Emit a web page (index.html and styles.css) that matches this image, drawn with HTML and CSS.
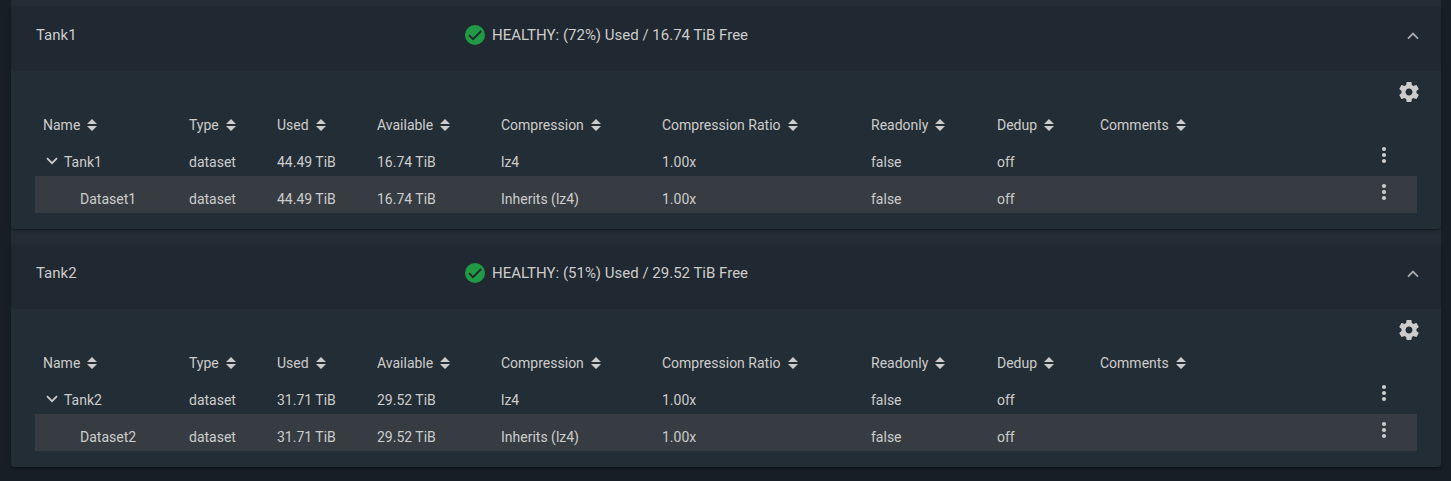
FILE: index.html
```html
<!DOCTYPE html>
<html lang="en">
<head>
<meta charset="utf-8">
<title>Storage Pools</title>
<link rel="stylesheet" href="styles.css">
</head>
<body>
<svg class="defs" aria-hidden="true">
  <symbol id="sort" viewBox="0 0 10 12"><path d="M5 0L10 5H0zM0 7H10L5 12z"/></symbol>
  <symbol id="down" viewBox="0 0 12 8"><path d="M1 1.2L6 6.2L11 1.2" fill="none" stroke="currentColor" stroke-width="1.8"/></symbol>
  <symbol id="up" viewBox="0 0 12 8"><path d="M1 6.6L6 1.6L11 6.6" fill="none" stroke="currentColor" stroke-width="1.8"/></symbol>
  <symbol id="dots" viewBox="0 0 6 18"><circle cx="3" cy="3" r="2.1"/><circle cx="3" cy="9" r="2.1"/><circle cx="3" cy="15" r="2.1"/></symbol>
  <symbol id="gear" viewBox="0 0 24 24"><path d="M19.43 12.98c.04-.32.07-.64.07-.98s-.03-.66-.07-.98l2.11-1.65c.19-.15.24-.42.12-.64l-2-3.46c-.12-.22-.39-.3-.61-.22l-2.49 1c-.52-.4-1.08-.73-1.69-.98l-.38-2.65C14.46 2.18 14.25 2 14 2h-4c-.25 0-.46.18-.49.42l-.38 2.65c-.61.25-1.17.59-1.69.98l-2.49-1c-.23-.09-.49 0-.61.22l-2 3.46c-.13.22-.07.49.12.64l2.11 1.65c-.04.32-.07.65-.07.98s.03.66.07.98l-2.11 1.65c-.19.15-.24.42-.12.64l2 3.46c.12.22.39.3.61.22l2.49-1c.52.4 1.08.73 1.69.98l.38 2.65c.03.24.24.42.49.42h4c.25 0 .46-.18.49-.42l.38-2.65c.61-.25 1.17-.59 1.69-.98l2.49 1c.23.09.49 0 .61-.22l2-3.46c.12-.22.07-.49-.12-.64l-2.11-1.65zM12 15.5c-1.93 0-3.5-1.57-3.5-3.5s1.57-3.5 3.5-3.5 3.5 1.57 3.5 3.5-1.57 3.5-3.5 3.5z"/></symbol>
  <symbol id="check" viewBox="0 0 20 20"><circle cx="10" cy="10" r="10" fill="#209a44"/><path d="M4 10.2L8 14.2L16.2 6" fill="none" stroke="#202830" stroke-width="1.9"/></symbol>
</svg>
<main class="pools">
  <section class="pool">
    <header class="pool-header">
      <span>Tank1</span>
      <span class="status"><svg class="check"><use href="#check"/></svg>HEALTHY: (72%) Used / 16.74 TiB Free</span>
      <button class="toggle" aria-label="Collapse Tank1"><svg class="chevron"><use href="#up"/></svg></button>
    </header>
    <div class="pool-body">
      <div class="toolbar"><button aria-label="Tank1 settings"><svg class="gear"><use href="#gear"/></svg></button></div>
      <table class="datasets">
        <colgroup><col class="c-name"><col class="c-type"><col class="c-used"><col class="c-available"><col class="c-compression"><col class="c-ratio"><col class="c-readonly"><col class="c-dedup"><col><col class="c-actions"></colgroup>
        <thead><tr>
          <th><button class="sort">Name<svg><use href="#sort"/></svg></button></th>
          <th><button class="sort">Type<svg><use href="#sort"/></svg></button></th>
          <th><button class="sort">Used<svg><use href="#sort"/></svg></button></th>
          <th><button class="sort">Available<svg><use href="#sort"/></svg></button></th>
          <th><button class="sort">Compression<svg><use href="#sort"/></svg></button></th>
          <th><button class="sort">Compression Ratio<svg><use href="#sort"/></svg></button></th>
          <th><button class="sort">Readonly<svg><use href="#sort"/></svg></button></th>
          <th><button class="sort">Dedup<svg><use href="#sort"/></svg></button></th>
          <th><button class="sort">Comments<svg><use href="#sort"/></svg></button></th>
          <td></td>
        </tr></thead>
        <tbody>
          <tr><td class="parent"><button class="expander" aria-label="Collapse row"><svg class="chevron"><use href="#down"/></svg></button>Tank1</td><td>dataset</td><td>44.49 TiB</td><td>16.74 TiB</td><td>lz4</td><td>1.00x</td><td>false</td><td>off</td><td></td><td class="actions"><button aria-label="Tank1 actions"><svg class="dots"><use href="#dots"/></svg></button></td></tr>
          <tr class="shaded"><td class="child">Dataset1</td><td>dataset</td><td>44.49 TiB</td><td>16.74 TiB</td><td>Inherits (lz4)</td><td>1.00x</td><td>false</td><td>off</td><td></td><td class="actions"><button aria-label="Dataset1 actions"><svg class="dots"><use href="#dots"/></svg></button></td></tr>
        </tbody>
      </table>
    </div>
  </section>
  <section class="pool">
    <header class="pool-header">
      <span>Tank2</span>
      <span class="status"><svg class="check"><use href="#check"/></svg>HEALTHY: (51%) Used / 29.52 TiB Free</span>
      <button class="toggle" aria-label="Collapse Tank2"><svg class="chevron"><use href="#up"/></svg></button>
    </header>
    <div class="pool-body">
      <div class="toolbar"><button aria-label="Tank2 settings"><svg class="gear"><use href="#gear"/></svg></button></div>
      <table class="datasets">
        <colgroup><col class="c-name"><col class="c-type"><col class="c-used"><col class="c-available"><col class="c-compression"><col class="c-ratio"><col class="c-readonly"><col class="c-dedup"><col><col class="c-actions"></colgroup>
        <thead><tr>
          <th><button class="sort">Name<svg><use href="#sort"/></svg></button></th>
          <th><button class="sort">Type<svg><use href="#sort"/></svg></button></th>
          <th><button class="sort">Used<svg><use href="#sort"/></svg></button></th>
          <th><button class="sort">Available<svg><use href="#sort"/></svg></button></th>
          <th><button class="sort">Compression<svg><use href="#sort"/></svg></button></th>
          <th><button class="sort">Compression Ratio<svg><use href="#sort"/></svg></button></th>
          <th><button class="sort">Readonly<svg><use href="#sort"/></svg></button></th>
          <th><button class="sort">Dedup<svg><use href="#sort"/></svg></button></th>
          <th><button class="sort">Comments<svg><use href="#sort"/></svg></button></th>
          <td></td>
        </tr></thead>
        <tbody>
          <tr><td class="parent"><button class="expander" aria-label="Collapse row"><svg class="chevron"><use href="#down"/></svg></button>Tank2</td><td>dataset</td><td>31.71 TiB</td><td>29.52 TiB</td><td>lz4</td><td>1.00x</td><td>false</td><td>off</td><td></td><td class="actions"><button aria-label="Tank2 actions"><svg class="dots"><use href="#dots"/></svg></button></td></tr>
          <tr class="shaded"><td class="child">Dataset2</td><td>dataset</td><td>31.71 TiB</td><td>29.52 TiB</td><td>Inherits (lz4)</td><td>1.00x</td><td>false</td><td>off</td><td></td><td class="actions"><button aria-label="Dataset2 actions"><svg class="dots"><use href="#dots"/></svg></button></td></tr>
        </tbody>
      </table>
    </div>
  </section>
</main>
</body>
</html>
```
FILE: styles.css
```css
* { box-sizing: border-box; }

body {
  margin: 0;
  padding: 0 10px 14px 11px;
  background: #171e26;
  color: #cccccc;
  font: 14px/20px Roboto, sans-serif;
}

.defs { position: absolute; width: 0; height: 0; }

svg { display: block; fill: currentColor; }

button {
  display: block;
  margin: 0;
  padding: 0;
  border: 0;
  background: none;
  color: inherit;
  font: inherit;
  cursor: pointer;
}

.pools {
  display: flex;
  flex-direction: column;
  gap: 16px;
  padding-top: 7px;
  border-radius: 0 0 4px 4px;
  background: #242d35;
}

.pool {
  border-radius: 4px;
  background: #232d35;
  box-shadow: 0 3px 1px -2px rgba(0, 0, 0, 0.2), 0 2px 2px rgba(0, 0, 0, 0.14), 0 1px 5px rgba(0, 0, 0, 0.12);
}

.pool-header {
  display: grid;
  grid-template-columns: 429px 1fr auto;
  align-items: start;
  min-height: 64px;
  padding: 18px 22px 0 25px;
  border-radius: 4px;
  background: #202831;
  font-size: 15px;
}

.status { display: flex; align-items: center; gap: 7px; }
.check { width: 20px; height: 20px; }
.toggle { padding-top: 7px; color: #a9abae; }
.chevron { width: 12px; height: 8px; }

.pool-body { padding: 0 24px 16px; }

.toolbar {
  display: flex;
  align-items: flex-end;
  justify-content: flex-end;
  height: 36px;
  margin-right: -4px;
  padding-bottom: 3px;
}

.gear { width: 24px; height: 24px; }

.datasets {
  width: 100%;
  table-layout: fixed;
  border-collapse: collapse;
}

.c-name { width: 146px; }
.c-type { width: 88px; }
.c-used { width: 100px; }
.c-available { width: 124px; }
.c-compression { width: 161px; }
.c-ratio { width: 209px; }
.c-readonly { width: 126px; }
.c-dedup { width: 103px; }
.c-actions { width: 66px; }

th, td {
  height: 37px;
  padding: 8px 0 0 8px;
  text-align: left;
  font-weight: 400;
  white-space: nowrap;
}

thead th, thead td { height: 32px; padding-top: 4px; }
.sort { display: flex; align-items: center; gap: 7px; }
.sort svg { width: 10px; height: 12px; }

.parent { padding-left: 11px; }
.expander { display: inline-block; margin-right: 6px; padding-bottom: 4px; vertical-align: middle; }
.child { padding-left: 45px; }
.shaded { background: #363c42; }

.actions { padding: 0; vertical-align: top; }
.actions button { margin: 0 auto; padding-top: 7px; }
.dots { width: 6px; height: 18px; }
```
